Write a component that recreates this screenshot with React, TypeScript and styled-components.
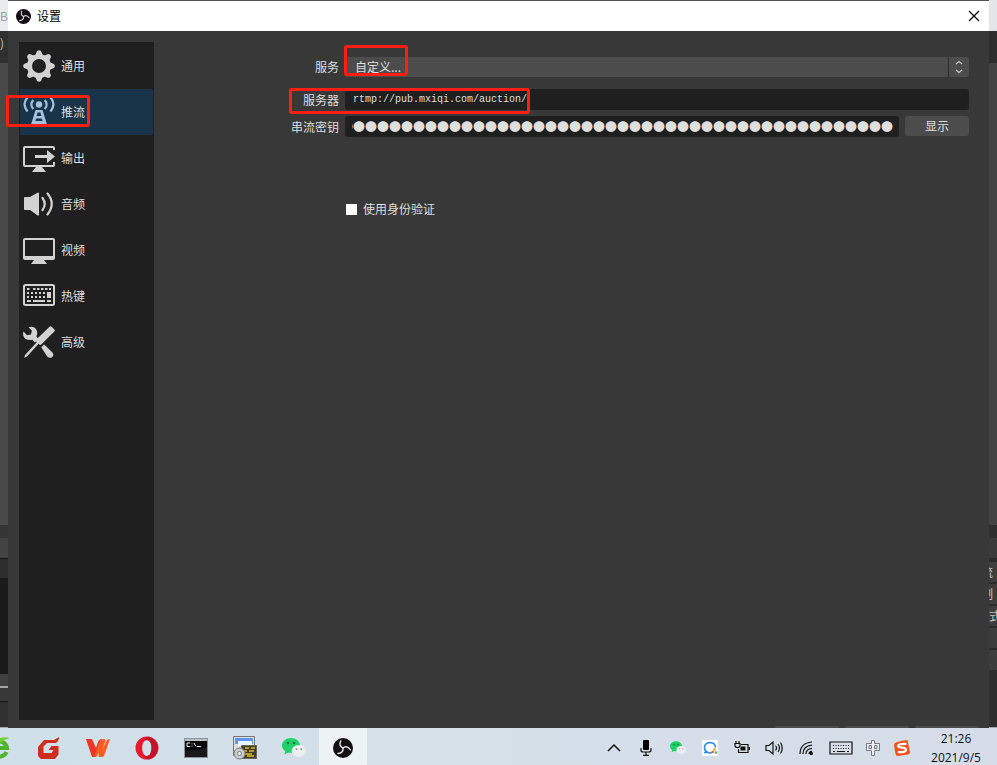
import React, { ReactNode } from "react";
import styled, { createGlobalStyle, css } from "styled-components";

const GlobalStyle = createGlobalStyle`
  * { box-sizing: border-box; }
  body {
    margin: 0;
    background: #383838;
    color: #dfdfdf;
    font-family: "Noto Sans CJK SC", sans-serif;
    font-size: 12px;
    line-height: 20px;
    overflow: hidden;
  }
  button, input, select { font: inherit; color: inherit; margin: 0; }
`;

const Desktop = styled.div`
  display: flex;
  flex-direction: column;
  height: 100vh;
`;

const Workspace = styled.div`
  display: grid;
  grid-template-columns: 8px 1fr 8px;
  flex: 1;
  min-height: 0;
`;

/* Visible edges of the main window behind the dialog */
const Edge = styled.div<{ $side: "left" | "right" }>`
  display: flex;
  flex-direction: column;
  overflow: hidden;
  box-shadow: inset ${(p) => (p.$side === "left" ? "-1px" : "1px")} 0 0 rgba(0, 0, 0, 0.3);
`;

const Band = styled.div<{ $h?: number; $bg: string; $end?: number; $fg?: string }>`
  display: flex;
  align-items: center;
  justify-content: ${(p) => (p.$end === undefined ? "flex-start" : "flex-end")};
  padding-right: ${(p) => p.$end ?? 0}px;
  flex: ${(p) => (p.$h ? `0 0 ${p.$h}px` : "1 1 0")};
  overflow: hidden;
  white-space: nowrap;
  background: ${(p) => p.$bg};
  color: ${(p) => p.$fg ?? "#c4c4c4"};
`;

const Dialog = styled.main`
  display: flex;
  flex-direction: column;
  min-width: 0;
  background: #383838;
  border-top: 1px solid #505050;
`;

const TitleBar = styled.header`
  display: flex;
  align-items: center;
  gap: 6px;
  height: 30px;
  padding: 0 0 0 8px;
  background: #fff;
  color: #000;
`;

const Title = styled.h1`
  flex: 1;
  margin: 0;
  font-size: 12px;
  font-weight: 400;
`;

const CloseButton = styled.button`
  display: grid;
  place-items: center;
  width: 30px;
  height: 30px;
  padding: 0;
  border: 0;
  background: none;
`;

const Body = styled.div`
  display: flex;
  flex: 1;
  min-height: 0;
  padding: 11px 0 6px 11px;
`;

const Sidebar = styled.nav`
  flex: 0 0 135px;
  padding: 1px;
  background: #1f1f1f;
`;

const NavItem = styled.button<{ $active?: boolean }>`
  position: relative;
  display: flex;
  align-items: center;
  gap: 6px;
  width: 100%;
  height: 46px;
  padding: 0 0 0 3px;
  border: 0;
  text-align: left;
  background: ${(p) => (p.$active ? "#193349" : "transparent")};
  svg { color: ${(p) => (p.$active ? "#a3c1de" : "#d2d2d2")}; }
`;

const Form = styled.form`
  display: flex;
  flex-direction: column;
  flex: 1;
  min-width: 0;
  padding: 15px 20px 0 0;
`;

const Row = styled.div<{ $gap?: number }>`
  display: grid;
  grid-template-columns: 185px 1fr;
  column-gap: 6px;
  align-items: center;
  margin-bottom: ${(p) => p.$gap ?? 0}px;
`;

const Label = styled.label`
  text-align: right;
`;

const Field = styled.div`
  position: relative;
  display: flex;
  align-items: flex-start;
  gap: 6px;
  min-width: 0;
`;

const ServiceSelect = styled.select`
  flex: 1;
  height: 20px;
  padding: 0 0 0 10px;
  border: 0;
  border-radius: 3px;
  background: #4c4c4c;
  appearance: none;
`;

const SelectArrows = styled.span`
  position: absolute;
  top: 0;
  right: 0;
  display: grid;
  place-items: center;
  width: 21px;
  height: 20px;
  border-left: 1px solid #2c2c2c;
  pointer-events: none;
`;

const TextInput = styled.input<{ $kind: "url" | "secret" }>`
  flex: 1;
  min-width: 0;
  height: 21px;
  padding: 0 6px 0 7px;
  border: 0;
  border-radius: 3px;
  background: #1f1f1f;
  ${(p) =>
    p.$kind === "url"
      ? css`
          padding-left: 8px;
          font-family: "Liberation Mono", monospace;
          font-size: 10px;
        `
      : css`
          text-indent: -11px;
        `}
`;

const ShowButton = styled.button`
  width: 64px;
  height: 20px;
  padding: 0;
  border: 0;
  border-radius: 3px;
  background: #4c4c4c;
`;

const CheckLabel = styled.label`
  grid-column: 2;
  display: flex;
  align-items: center;
  gap: 6px;
  padding-left: 1px;
`;

const Checkbox = styled.input`
  width: 11px;
  height: 11px;
  background: #fff;
  appearance: none;
  &:checked { background: #5b8bd0; }
`;

const Highlight = styled.span<{ $x: number; $y: number; $w: number; $h: number }>`
  position: absolute;
  left: ${(p) => p.$x}px;
  top: ${(p) => p.$y}px;
  width: ${(p) => p.$w}px;
  height: ${(p) => p.$h}px;
  border: 3px solid #ff1f10;
  border-radius: 3px;
  pointer-events: none;
`;

const Footer = styled.footer`
  display: flex;
  justify-content: flex-end;
  gap: 6px;
  height: 2px;
  padding-right: 10px;
`;

const FooterTab = styled.span`
  width: 64px;
  border-radius: 3px 3px 0 0;
  background: #4c4c4c;
`;

const Taskbar = styled.footer`
  display: flex;
  justify-content: space-between;
  height: 37px;
  overflow: hidden;
  background: linear-gradient(90deg, #cfe0e8, #d5e0e9 40%, #d6dde8);
  color: #111;
`;

const Apps = styled.div`
  display: flex;
  gap: 1px;
  margin-left: -24px;
`;

const AppButton = styled.button<{ $active?: boolean }>`
  display: grid;
  place-items: center;
  width: 48px;
  padding: 2px 0 0;
  border: 0;
  background: ${(p) => (p.$active ? "#edf2f5" : "transparent")};
`;

const Tray = styled.div`
  display: flex;
  padding-right: 3px;
`;

const TrayButton = styled.button<{ $w?: number }>`
  display: grid;
  place-items: center;
  width: ${(p) => p.$w ?? 32}px;
  padding: 2px 0 0;
  border: 0;
  background: none;
`;

const Clock = styled.time`
  display: flex;
  flex-direction: column;
  width: 76px;
  padding-top: 1px;
  text-align: center;
  font-family: "Open Sans", sans-serif;
  line-height: 19px;
`;

const ObsLogo = ({ size }: { size: number }) => (
  <svg width={size} height={size} viewBox="0 0 24 24" aria-hidden="true">
    <circle cx="12" cy="12" r="12" fill="#121012" />
    {[0, 120, 240].map((a) => (
      <path
        key={a}
        d="M12 12Q6.500 9.500 9.300 3.500"
        fill="none"
        stroke="#dcdcdc"
        strokeWidth="1.800"
        strokeLinecap="round"
        transform={`rotate(${a} 12 12)`}
      />
    ))}
  </svg>
);

const GearIcon = () => (
  <svg width="32" height="32" viewBox="0 0 32 32" fill="currentColor">
    <path
      fillRule="evenodd"
      d="M16 4a12 12 0 1 0 0 24a12 12 0 1 0 0-24zM16 9a7 7 0 1 1 0 14a7 7 0 1 1 0-14z"
    />
    {[0, 45, 90, 135, 180, 225, 270, 315].map((a) => (
      <path key={a} d="M12 6l2-5q2-1.600 4 0l2 5z" transform={`rotate(${a} 16 16)`} />
    ))}
  </svg>
);

const AntennaIcon = () => (
  <svg width="32" height="32" viewBox="0 0 32 32">
    <circle cx="16" cy="8.500" r="3.200" fill="currentColor" />
    <g fill="none" stroke="currentColor" strokeWidth="2.200">
      <path d="M10.300 4q-4 4.500 0 9M21.700 4q4 4.500 0 9" />
      <path d="M4.500 1.500q-6 6.500 0 14M27.500 1.500q6 6.500 0 14" />
    </g>
    <path
      fill="currentColor"
      fillRule="evenodd"
      d="M12.500 14h7L24 28.500H8zM14.600 16.500l-.9 3.500h4.600l-.9-3.500zM13.200 22.500l-.8 2.500h7.200l-.8-2.500z"
    />
  </svg>
);

const OutputIcon = () => (
  <svg width="32" height="32" viewBox="0 -1 32 32">
    <path d="M31 7V5q0-1-1-1H2q-1 0-1 1v17q0 1 1 1h28q1 0 1-1v-3" fill="none" stroke="currentColor" strokeWidth="2" />
    <path d="M12 12h12V7l8 6.500-8 6.500v-5H12zM13 24h6l4 5H9z" fill="currentColor" />
  </svg>
);

const AudioIcon = () => (
  <svg width="32" height="32" viewBox="0 0 32 32">
    <path d="M1 10q0-1 1-1h5l7-4q2-1 2 0v22q0 1-2 0l-7-5H2q-1 0-1-1z" fill="currentColor" />
    <path d="M19.500 10q4.500 6 0 12M24.500 5.500q8.500 10 0 21" fill="none" stroke="currentColor" strokeWidth="2.200" strokeLinecap="round" />
  </svg>
);

const VideoIcon = () => (
  <svg width="32" height="32" viewBox="0 -1 32 32" fill="currentColor">
    <path fillRule="evenodd" d="M2 3h28q2 0 2 2v18q0 2-2 2h-9l3 4H8l3-4H2q-2 0-2-2V5q0-2 2-2zM2 5v16h28V5z" />
  </svg>
);

const KeyboardIcon = () => (
  <svg width="32" height="32" viewBox="0 1 32 32">
    <rect x="1" y="6" width="30" height="20" rx="1.500" fill="none" stroke="currentColor" strokeWidth="2" />
    <g stroke="currentColor" strokeWidth="2">
      <path d="M4 10h4M10 10h18" strokeDasharray="2.500 1.500" />
      <path d="M4 14h19M4 18h19" strokeDasharray="2 2" />
      <path d="M4 22h4M10 22h12M24 22h4" />
    </g>
    <path d="M24 13h4v6h-4z" fill="currentColor" />
  </svg>
);

const ToolsIcon = () => (
  <svg width="32" height="32" viewBox="0 0 32 32" fill="currentColor">
    <path d="M26.500.8q1-1.200 2.200 0l2.600 2.600q1.200 1.200 0 2.200L18 18.800q-.8.600-1.600-.2l-.8-.8L4 30.500 1.200 31.800 2 29 13.800 16.200l-.7-.7q-.8-.8 0-1.700z" />
    <path d="M5.500 1.200Q11-.5 13.500 4q1.500 3-.1 6.500l2 2.300-3.400 3.600-2.600-2.600Q2 15 .2 9.500q-.4-2 .3-4L4 9.300l4-.9.900-3.800zM18.200 21.200l3-2.800 8 7.800q2.500 3-.2 5-2.400 1.500-4.800-.8z" />
  </svg>
);

const WeChatIcon = ({ size }: { size: number }) => (
  <svg width={size} height={size} viewBox="0 0 24 24">
    <path d="M9 2c5 0 9 3.200 9 7.500S14 17 9 17q-1.500 0-2.800-.4L2.500 18.500l.8-3.300C1.300 13.800 0 11.800 0 9.500 0 5.200 4 2 9 2z" fill="#1fd267" />
    <ellipse cx="16.800" cy="15" rx="7.200" ry="6" fill="#eceff0" />
    <g fill="#17733f">
      <circle cx="6" cy="7" r="1.200" />
      <circle cx="12" cy="7" r="1.200" />
    </g>
    <g fill="#8b8f91">
      <circle cx="14.500" cy="13.200" r=".9" />
      <circle cx="19.200" cy="13.200" r=".9" />
    </g>
  </svg>
);

const BrowserIcon = () => (
  <svg width="24" height="24" viewBox="0 0 24 24">
    <path d="M18.500 16A7.500 7.500 0 1 1 19 12H8" fill="none" stroke="#4fb52c" strokeWidth="4" />
    <path d="M3 8Q12-1 22 2q-5 1-8 4" fill="#74cf3b" />
  </svg>
);

const GIcon = () => (
  <svg width="24" height="24" viewBox="0 0 24 24">
    <path d="M22 1q.5 3-3 6H10L6.500 10.500V17h8l2-3h-5l3-4h7v8.500L18 23H4l-3-3v-9l6-7h10z" fill="#cf2d1f" />
  </svg>
);

const WpsIcon = () => (
  <svg width="24" height="24" viewBox="0 0 24 24">
    <path d="M0 3h6l4 9 2-6q1-3 4-3L11 20q-1 1-3 1H6z" fill="#ee3424" />
    <path d="M8 21l5-14q1-4 5-4 2 0 1 3l-3 8 4-8q1-3 4-3l-6 17q-1 1-3 1h-2l-1-6-1 4q-1 2-3 2z" fill="#ff5a1f" />
  </svg>
);

const OperaIcon = () => (
  <svg width="24" height="24" viewBox="0 0 24 24">
    <path fillRule="evenodd" fill="#e8192f" d="M12 .5a11.500 11.500 0 1 0 0 23a11.500 11.500 0 1 0 0-23zM12 4c3 0 4.800 3.600 4.800 8s-1.800 8-4.800 8-4.800-3.600-4.800-8S9 4 12 4z" />
    <path fill="#c3142c" d="M14 .8a11.500 11.500 0 0 1 0 22.400q-3 .2-5-3.800 2 1.200 4 .4c4.500-2 4.700-13.600 0-15.600q-2-.8-4 .4 2-4 5-3.800z" />
  </svg>
);

const TerminalIcon = () => (
  <svg width="24" height="20" viewBox="0 0 24 20">
    <rect x=".5" y=".5" width="23" height="19" fill="#080808" stroke="#8c9498" />
    <path d="M1 1h22v2H1z" fill="#b9c0c4" />
    <path d="M6 5H3v3.500h3M8 5.500v.8M8 7.800v.8M10 5l2 3.500M13 8.500h4" fill="none" stroke="#eee" />
    <path d="M1 12q10 2 22-3v10H1z" fill="#191919" />
  </svg>
);

const InstallerIcon = () => (
  <svg width="24" height="24" viewBox="0 0 24 24">
    <path d="M.5.500h21v19H.500z" fill="#dcdfe0" stroke="#777" />
    <path d="M2 2h18v6H2z" fill="#5e95ee" />
    <path d="M5 5h14v5H5z" fill="#eef4fb" />
    <path d="M8.500 9.500h15v13h-15z" fill="#3e3d2b" stroke="#66675d" />
    <path d="M12 12h4M18 12h4M11 15h3M16 15h5M12 18h7M14 20h7" stroke="#e0bc21" strokeWidth="1.500" />
    <circle cx="6.500" cy="17.500" r="5.500" fill="#c9cbcc" stroke="#777" />
    <circle cx="6.500" cy="17.500" r="2" fill="#fff" stroke="#777" />
  </svg>
);

const Line = ({ w, h = 16, children }: { w: number; h?: number; children: ReactNode }) => (
  <svg width={w} height={h} viewBox={`0 0 ${w} ${h}`} fill="none" stroke="#111" strokeWidth="1.200">
    {children}
  </svg>
);

const navItems: { name: string; icon: ReactNode }[] = [
  { name: "通用", icon: <GearIcon /> },
  { name: "推流", icon: <AntennaIcon /> },
  { name: "输出", icon: <OutputIcon /> },
  { name: "音频", icon: <AudioIcon /> },
  { name: "视频", icon: <VideoIcon /> },
  { name: "热键", icon: <KeyboardIcon /> },
  { name: "高级", icon: <ToolsIcon /> },
];

const apps: { name: string; icon: ReactNode }[] = [
  { name: "Browser", icon: <BrowserIcon /> },
  { name: "G", icon: <GIcon /> },
  { name: "WPS", icon: <WpsIcon /> },
  { name: "Opera", icon: <OperaIcon /> },
  { name: "Terminal", icon: <TerminalIcon /> },
  { name: "Installer", icon: <InstallerIcon /> },
  { name: "WeChat", icon: <WeChatIcon size={24} /> },
  { name: "OBS", icon: <ObsLogo size={20} /> },
];

const tray: { name: string; w?: number; icon: ReactNode }[] = [
  { name: "More", icon: <Line w={14}><path d="M1 11l6-6 6 6" strokeWidth="1.500" /></Line> },
  {
    name: "Microphone",
    icon: (
      <Line w={12}>
        <rect x="3" y="0" width="6" height="10" rx="1" fill="#000" stroke="none" />
        <path d="M1 8v2q0 2 2 2h6q2 0 2-2V8M6 12v3M3 15.300h6" />
      </Line>
    ),
  },
  { name: "WeChat", icon: <WeChatIcon size={16} /> },
  {
    name: "Sync",
    icon: (
      <svg width="16" height="16" viewBox="0 0 16 16">
        <rect width="16" height="16" rx="1" fill="#fff" />
        <path d="M2 12.500h4Q2.500 11 2.500 7.500q0-4.500 5.500-5 5.500.5 5.500 5" fill="none" stroke="#2a8de8" strokeWidth="1.700" />
        <path d="M6 12.500q2 .8 4 0" fill="none" stroke="#2a8de8" strokeWidth="1.500" />
        <circle cx="12.500" cy="9.500" r="1.500" fill="#f4b52a" />
        <circle cx="10.800" cy="12" r="1.300" fill="#ee593d" />
        <circle cx="14" cy="12.500" r="1.300" fill="#49b75a" />
      </svg>
    ),
  },
  {
    name: "Battery",
    icon: (
      <Line w={16}>
        <path d="M7 4.500h7v8H4.500V9M15.400 7v3M1 3.500h5v2q0 2-2.500 2T1 5.500zM2 1v2M5 1v2" />
        <path d="M6.500 6.500h5v4h-5z" fill="#111" stroke="none" />
      </Line>
    ),
  },
  {
    name: "Volume",
    icon: (
      <Line w={18}>
        <path d="M1 5.500h3l4-3.500v12l-4-3.500H1zM10.500 5.500q2 2.500 0 5M13 4q3 4 0 8M15.500 2.500q3.500 5.500 0 11" />
      </Line>
    ),
  },
  {
    name: "Network",
    icon: (
      <Line w={14}>
        <path d="M1 14Q1 3 13 2M4 14Q4 6 13 5.200M7 14Q7 9 13 8.300M10 14q0-2.500 3-2.700" />
        <circle cx="12.200" cy="13.500" r="1.200" fill="#111" />
      </Line>
    ),
  },
  {
    name: "Keyboard",
    w: 38,
    icon: (
      <Line w={24}>
        <path d="M1 2h22v12H1z" />
        <path d="M4 5.500h17M4 8.500h17" strokeDasharray="1 1.500" />
        <path d="M4 11.500h2M8 11.500h8M18 11.500h2" />
      </Line>
    ),
  },
  {
    name: "中",
    w: 26,
    icon: (
      <Line w={14}>
        <path d="M5.500.500h3v3h5v7h-5v5h-3v-5h-5v-7h5zM3 5.500v3h2.500v-3zM8.500 5.500v3H11v-3z" stroke="#787881" fill="#edf0f5" strokeWidth="1" />
      </Line>
    ),
  },
  {
    name: "Sogou",
    icon: (
      <svg width="16" height="16" viewBox="0 0 16 16">
        <path d="M2 2.500Q8 0 13.500 0L16 12q0 2-2 2.500L4 16q-2 0-2.500-2L0 5q0-2 2-2.500z" fill="#f4501e" />
        <path d="M12.500 4Q4 3.500 4 6C4 8.500 12 6.500 12 9.500 12 12 8 12.500 3.800 12" fill="none" stroke="#fff" strokeWidth="2.200" />
      </svg>
    ),
  },
];

export default function App() {
  return (
    <Desktop>
      <GlobalStyle />
      <Workspace>
        <Edge $side="left">
          <Band $h={31} $bg="#e9ebed" $fg="#96a2ad">BS</Band>
          <Band $h={24} $bg="#2f2f2f">)</Band>
          <Band $h={8} $bg="#2f2f2f" />
          <Band $bg="#494949" />
          <Band $h={13} $bg="#353535" />
          <Band $h={20} $bg="#434343" />
          <Band $h={1} $bg="#161616" />
          <Band $h={19} $bg="#2e2e2e" />
          <Band $h={96} $bg="#1a1a1a" />
          <Band $h={12} $bg="#3f3f3f" />
          <Band $h={2} $bg="#a6a6a6" />
          <Band $h={13} $bg="#383838" />
          <Band $h={1} $bg="#161616" />
          <Band $h={25} $bg="#303030" />
          <Band $h={1} $bg="#a4a8aa" />
        </Edge>

        <Dialog>
          <TitleBar>
            <ObsLogo size={15} />
            <Title>设置</Title>
            <CloseButton aria-label="关闭">
              <svg width="12" height="12" viewBox="0 0 12 12" fill="none" stroke="#000" strokeWidth="1.200">
                <path d="M1 1l10 10M11 1L1 11" />
              </svg>
            </CloseButton>
          </TitleBar>
          <Body>
            <Sidebar>
              {navItems.map((item) => (
                <NavItem key={item.name} type="button" $active={item.name === "推流"}>
                  {item.icon}
                  {item.name}
                  {item.name === "推流" && <Highlight $x={-14} $y={6} $w={84} $h={32} />}
                </NavItem>
              ))}
            </Sidebar>
            <Form onSubmit={(e) => e.preventDefault()}>
              <Row $gap={12}>
                <Label htmlFor="service">服务</Label>
                <Field>
                  <ServiceSelect id="service">
                    <option>自定义...</option>
                  </ServiceSelect>
                  <SelectArrows>
                    <svg width="8" height="14" viewBox="0 0 8 14" fill="none" stroke="#c8c8c8" strokeWidth="1.200">
                      <path d="M1 4l3-2.500L7 4M1 10l3 2.500L7 10" />
                    </svg>
                  </SelectArrows>
                  <Highlight $x={-1} $y={-12} $w={64} $h={31} />
                </Field>
              </Row>
              <Row $gap={6}>
                <Label htmlFor="server">服务器</Label>
                <Field>
                  <TextInput id="server" $kind="url" defaultValue="rtmp://pub.mxiqi.com/auction/" />
                  <Highlight $x={-56} $y={-1} $w={241} $h={26} />
                </Field>
              </Row>
              <Row $gap={62}>
                <Label htmlFor="key">串流密钥</Label>
                <Field>
                  <TextInput id="key" $kind="secret" defaultValue={"●".repeat(46)} />
                  <ShowButton type="button">显示</ShowButton>
                </Field>
              </Row>
              <Row>
                <CheckLabel>
                  <Checkbox type="checkbox" />
                  使用身份验证
                </CheckLabel>
              </Row>
            </Form>
          </Body>
          <Footer>
            <FooterTab />
            <FooterTab />
            <FooterTab />
          </Footer>
        </Dialog>

        <Edge $side="right">
          <Band $h={31} $bg="#e4e5e6" />
          <Band $h={32} $bg="#2d2d2d" />
          <Band $bg="#434343" />
          <Band $h={13} $bg="#2e2e2e" />
          <Band $h={20} $bg="#3b3b3b" />
          <Band $h={4} $bg="#2b2b2b" />
          <Band $h={20} $bg="#3d3d3d" $end={4}>流</Band>
          <Band $h={2} $bg="#2b2b2b" />
          <Band $h={20} $bg="#3d3d3d" $end={4}>制</Band>
          <Band $h={2} $bg="#2b2b2b" />
          <Band $h={20} $bg="#3d3d3d">式</Band>
          <Band $h={2} $bg="#2b2b2b" />
          <Band $h={20} $bg="#3d3d3d" />
          <Band $h={2} $bg="#2b2b2b" />
          <Band $h={20} $bg="#3d3d3d" />
          <Band $h={57} $bg="#2e2e2e" />
          <Band $h={1} $bg="#a4a8aa" />
        </Edge>
      </Workspace>

      <Taskbar>
        <Apps>
          {apps.map((app) => (
            <AppButton key={app.name} aria-label={app.name} $active={app.name === "OBS"}>
              {app.icon}
            </AppButton>
          ))}
        </Apps>
        <Tray>
          {tray.map((item) => (
            <TrayButton key={item.name} aria-label={item.name} $w={item.w}>
              {item.icon}
            </TrayButton>
          ))}
          <Clock>
            <span>21:26</span>
            <span>2021/9/5</span>
          </Clock>
        </Tray>
      </Taskbar>
    </Desktop>
  );
}
